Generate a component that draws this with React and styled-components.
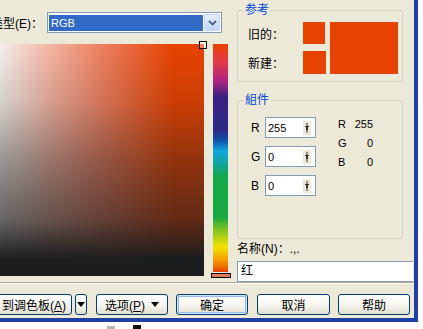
import React from 'react';
import styled, { createGlobalStyle } from 'styled-components';

const GlobalStyle = createGlobalStyle`
    body {
        margin: 0;
        background: #fff;
    }
`;

const Screen = styled.div`
    width: 423px;
    height: 329px;
    overflow: hidden;
    background: #fff;
    font-family: "Liberation Sans", "Noto Sans CJK SC", sans-serif;
    font-size: 12px;
    color: #000;
`;

const Dialog = styled.div`
    width: 414px;
    height: 318px;
    background: #ece9d8;
    border-right: 4px solid #1d3fa6;
    border-bottom: 4px solid #1d3fa6;
    display: flex;
    flex-direction: column;
    overflow: hidden;
`;

const Body = styled.div`
    display: flex;
    height: 282px;
`;

const LeftPane = styled.div`
    width: 232px;
    padding-top: 12px;
    box-sizing: border-box;
`;

const ModelRow = styled.div`
    display: flex;
    align-items: center;
    height: 21px;
`;

const ModelLabel = styled.span`
    margin-left: -9px;
    width: 56px;
    flex-shrink: 0;
    white-space: nowrap;
`;

const Latin = styled.span`
    font-family: "Liberation Sans", sans-serif;
`;

const Select = styled.div`
    width: 175px;
    height: 21px;
    box-sizing: border-box;
    border: 1px solid #7f9db9;
    background: #fff;
    display: flex;
    align-items: center;
    padding: 1px;
    gap: 1px;
`;

const SelectValue = styled.div`
    flex: 1;
    height: 16px;
    background: #316ac5;
    color: #fff;
    font-size: 11px;
    line-height: 16px;
    padding-left: 2px;
`;

const DropButton = styled.div`
    width: 16px;
    height: 17px;
    box-sizing: border-box;
    border: 1px solid #c3d3fd;
    border-radius: 2px;
    background: linear-gradient(180deg, #e6eefc 0%, #c4d5f9 100%);
    display: flex;
    align-items: center;
    justify-content: center;
`;

const Picker = styled.div`
    position: relative;
    margin-top: 11px;
    display: flex;
    gap: 9px;
`;

const ColorField = styled.div`
    width: 204px;
    height: 232px;
    background:
        linear-gradient(180deg,
            rgba(27, 29, 31, 0) 0%,
            rgba(27, 29, 31, 0.14) 25%,
            rgba(27, 29, 31, 0.42) 50%,
            rgba(27, 29, 31, 0.66) 76%,
            #1b1d1f 93%),
        linear-gradient(90deg, #f2f0ec 0%, #f4b4a0 25%, #ee8060 50%, #e84300 85%);
`;

const HueBar = styled.div`
    width: 15px;
    height: 228px;
    background: linear-gradient(180deg,
        #e84300 0%, #e23a4a 8%, #b02480 16%, #3a2080 23%, #2c2a86 38%,
        #0d4fa8 42%, #12a6dc 47%, #0fa58a 54%, #13a84a 58%, #18a83e 76%,
        #8ac41e 82%, #f2e402 89%, #f49a00 95%, #e84300 100%);
`;

const FieldMarker = styled.div`
    position: absolute;
    left: 199px;
    top: -3px;
    width: 8px;
    height: 8px;
    box-sizing: border-box;
    border: 1px solid #000;
    background: rgba(255, 255, 255, 0.35);
`;

const HueMarker = styled.div`
    position: absolute;
    left: 211px;
    top: 229px;
    width: 20px;
    height: 5px;
    box-sizing: border-box;
    border: 1px solid #000;
    background: #e07a55;
`;

const RightPane = styled.div`
    margin-left: 5px;
    width: 177px;
    padding-top: 3px;
    display: flex;
    flex-direction: column;
`;

const Group = styled.fieldset`
    margin: ${p => p.$gap || 0}px 0 0 0;
    width: 166px;
    box-sizing: border-box;
    border: 1px solid #d0d0bf;
    border-radius: 3px;
    padding: ${p => p.$top}px 7px ${p => p.$bottom}px 10px;
    min-width: 0;
`;

const Legend = styled.legend`
    margin-left: -5px;
    padding: 0 2px;
    color: #0046d5;
    line-height: 14px;
`;

const RefGrid = styled.div`
    display: grid;
    grid-template-columns: 51px 23px 68px;
    grid-template-rows: 22px 23px;
    column-gap: 4px;
    row-gap: 7px;
    align-items: center;
`;

const Swatch = styled.div`
    background: #e64200;
    width: ${p => p.$w}px;
    height: 100%;
    grid-row: ${p => p.$span ? '1 / 3' : 'auto'};
    grid-column: ${p => p.$span ? '3' : 'auto'};
`;

const Components = styled.div`
    display: flex;
    align-items: flex-start;
`;

const InputCol = styled.div`
    display: flex;
    flex-direction: column;
    gap: 8px;
`;

const InputRow = styled.div`
    display: flex;
    align-items: center;
`;

const ChanLabel = styled.span`
    width: 17px;
    padding-left: 3px;
    box-sizing: border-box;
`;

const SpinInput = styled.div`
    width: 51px;
    height: 21px;
    box-sizing: border-box;
    border: 1px solid #7f9db9;
    background: #fff;
    display: flex;
    align-items: center;
    padding: 0 4px 0 2px;
    font-size: 11px;
`;

const SpinValue = styled.span`
    flex: 1;
`;

const ReadoutCol = styled.div`
    margin-left: 22px;
    margin-top: -2px;
    display: flex;
    flex-direction: column;
`;

const Readout = styled.div`
    width: 35px;
    height: 19px;
    line-height: 19px;
    display: flex;
    justify-content: space-between;
    font-size: 11px;
`;

const NameLabel = styled.div`
    margin-top: 3px;
    line-height: 14px;
    white-space: nowrap;
`;

const NameInput = styled.div`
    margin-top: 5px;
    width: 176px;
    height: 21px;
    box-sizing: border-box;
    border: 1px solid #7f9db9;
    border-right: none;
    background: #fff;
    padding-left: 3px;
    line-height: 19px;
`;

const Separator = styled.div`
    border-top: 1px solid #aca899;
    border-bottom: 1px solid #fff;
`;

const ButtonRow = styled.div`
    margin-top: 10px;
    display: flex;
    align-items: center;
`;

const Button = styled.div`
    width: ${p => p.$w}px;
    height: 21px;
    margin-left: ${p => p.$ml}px;
    box-sizing: border-box;
    flex-shrink: 0;
    border: 1px solid #003c74;
    border-radius: 3px;
    background: linear-gradient(180deg, #ffffff 0%, #f5f4ef 55%, #e2ded0 100%);
    box-shadow: ${p => p.$default ? 'inset 0 0 0 1px #cee7ff, inset 0 0 0 2px #98b8ea' : 'none'};
    display: flex;
    align-items: center;
    justify-content: center;
    gap: 6px;
    white-space: nowrap;
`;

const Key = styled.span`
    text-decoration: underline;
`;

const Footer = styled.div`
    display: flex;
    align-items: flex-end;
    height: 7px;
`;

const Scrap = styled.div`
    width: ${p => p.$w}px;
    height: ${p => p.$h}px;
    margin-left: ${p => p.$ml}px;
    background: ${p => p.$c};
`;

const Chevron = () => (
    <svg width="9" height="6" viewBox="0 0 9 6">
        <path d="M1 1 L4.5 4.5 L8 1" fill="none" stroke="#4d6185" strokeWidth="1.8" />
    </svg>
);

const DownTriangle = () => (
    <svg width="8" height="5" viewBox="0 0 8 5">
        <path d="M0 0 H8 L4 5 Z" fill="#000" />
    </svg>
);

const SliderGlyph = () => (
    <svg width="8" height="14" viewBox="0 0 8 14">
        <rect x="0" y="0" width="8" height="14" fill="#ece9d8" />
        <line x1="4" y1="2" x2="4" y2="12" stroke="#333" strokeWidth="1" />
        <line x1="2" y1="5.5" x2="6" y2="5.5" stroke="#333" strokeWidth="1" />
        <rect x="3" y="6" width="2" height="3" fill="#333" />
    </svg>
);

const channels = [
    { ch: 'R', value: 255 },
    { ch: 'G', value: 0 },
    { ch: 'B', value: 0 },
];

const App = () => {
    return (
        <Screen>
            <GlobalStyle />
            <Dialog>
                <Body>
                    <LeftPane>
                        <ModelRow>
                            <ModelLabel>类型<Latin>(E)</Latin>：</ModelLabel>
                            <Select>
                                <SelectValue>RGB</SelectValue>
                                <DropButton><Chevron /></DropButton>
                            </Select>
                        </ModelRow>
                        <Picker>
                            <ColorField />
                            <HueBar />
                            <FieldMarker />
                            <HueMarker />
                        </Picker>
                    </LeftPane>
                    <RightPane>
                        <Group $top={5} $bottom={7}>
                            <Legend>参考</Legend>
                            <RefGrid>
                                <span>旧的：</span>
                                <Swatch $w={22} />
                                <Swatch $w={68} $span />
                                <span>新建：</span>
                                <Swatch $w={23} />
                            </RefGrid>
                        </Group>
                        <Group $gap={11} $top={10} $bottom={42}>
                            <Legend>組件</Legend>
                            <Components>
                                <InputCol>
                                    {channels.map(c => (
                                        <InputRow key={c.ch}>
                                            <ChanLabel>{c.ch}</ChanLabel>
                                            <SpinInput>
                                                <SpinValue>{c.value}</SpinValue>
                                                <SliderGlyph />
                                            </SpinInput>
                                        </InputRow>
                                    ))}
                                </InputCol>
                                <ReadoutCol>
                                    {channels.map(c => (
                                        <Readout key={c.ch}>
                                            <span>{c.ch}</span>
                                            <span>{c.value}</span>
                                        </Readout>
                                    ))}
                                </ReadoutCol>
                            </Components>
                        </Group>
                        <NameLabel>名称<Latin>(N)</Latin>：<Latin>.,.</Latin></NameLabel>
                        <NameInput>红</NameInput>
                    </RightPane>
                </Body>
                <Separator />
                <ButtonRow>
                    <Button $w={76} $ml={-4}><span>到调色板<Latin>(<Key>A</Key>)</Latin></span></Button>
                    <Button $w={12} $ml={3}><DownTriangle /></Button>
                    <Button $w={72} $ml={9}><span>选项<Latin>(<Key>P</Key>)</Latin></span><DownTriangle /></Button>
                    <Button $w={72} $ml={8} $default>确定</Button>
                    <Button $w={73} $ml={9}>取消</Button>
                    <Button $w={72} $ml={8}>帮助</Button>
                </ButtonRow>
            </Dialog>
            <Footer>
                <Scrap $w={8} $h={3} $ml={107} $c="#b8b8b8" />
                <Scrap $w={8} $h={4} $ml={18} $c="#111" />
            </Footer>
        </Screen>
    );
};

export default App;
